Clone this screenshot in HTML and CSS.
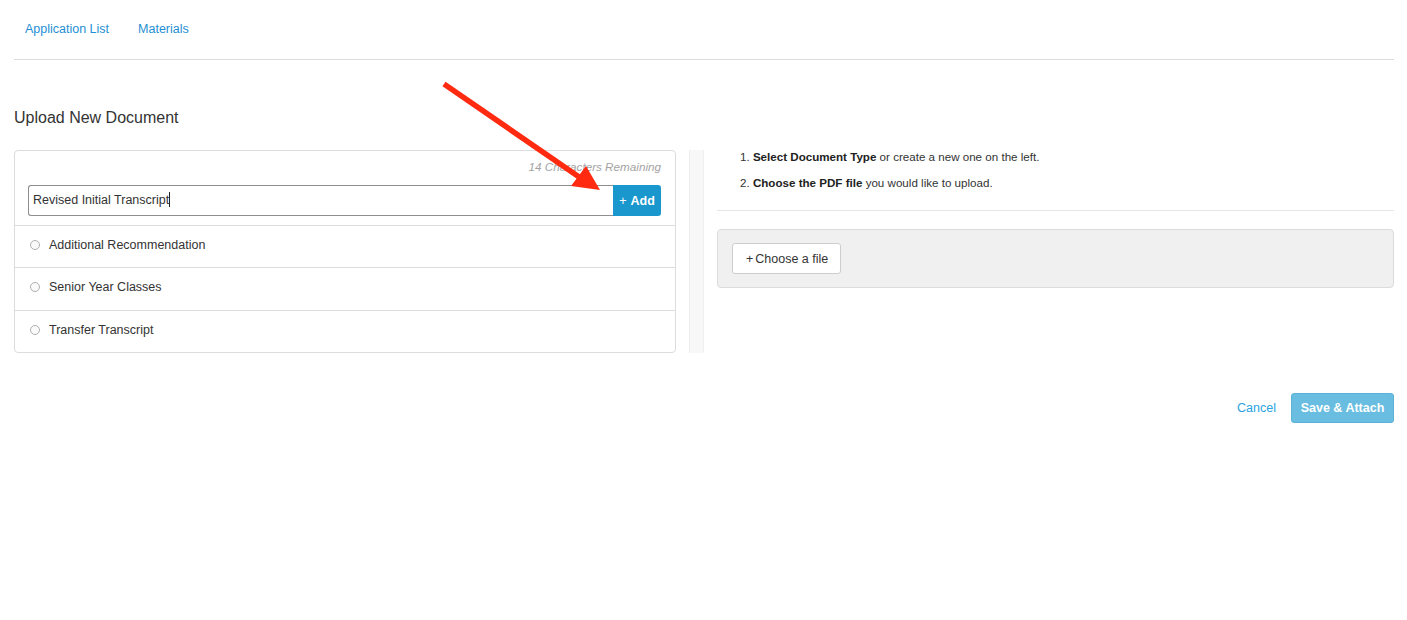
FILE: index.html
```html
<!DOCTYPE html>
<html>
<head>
<meta charset="utf-8">
<link rel="stylesheet" href="styles.css">
</head>
<body>
<div class="page">
  <nav class="nav">
    <a class="nav-link" href="#">Application List</a>
    <a class="nav-link" href="#">Materials</a>
  </nav>
  <h1 class="title">Upload New Document</h1>
  <div class="columns">
    <div class="types">
      <div class="types-head">
        <div class="remaining">14 Characters Remaining</div>
        <div class="input-group">
          <div class="text-input">Revised Initial Transcript<span class="caret"></span></div>
          <button class="add-btn"><span class="plus">+</span> Add</button>
        </div>
      </div>
      <div class="type-row"><span class="radio"></span>Additional Recommendation</div>
      <div class="type-row type-row-mid"><span class="radio"></span>Senior Year Classes</div>
      <div class="type-row"><span class="radio"></span>Transfer Transcript</div>
    </div>
    <div class="divider"></div>
    <div class="upload">
      <div class="steps">
        <div class="step">1. <b>Select Document Type</b> or create a new one on the left.</div>
        <div class="step">2. <b>Choose the PDF file</b> you would like to upload.</div>
      </div>
      <div class="file-box">
        <button class="file-btn"><span class="fplus">+</span>Choose a file</button>
      </div>
    </div>
  </div>
  <div class="actions">
    <a class="cancel" href="#">Cancel</a>
    <button class="save">Save &amp; Attach</button>
  </div>
</div>
<svg class="arrow" width="1407" height="620" viewBox="0 0 1407 620">
  <line x1="444" y1="84" x2="582" y2="179" stroke="#ff2a10" stroke-width="5.5" stroke-linecap="butt"/>
  <polygon points="600,190 571,186 586,166" fill="#ff2a10"/>
</svg>
</body>
</html>
```

FILE: styles.css
```css
html, body {
  margin: 0;
  padding: 0;
  background: #fff;
}
body {
  font-family: "Liberation Sans", Arial, Helvetica, sans-serif;
  color: #333;
  font-size: 12.5px;
  position: relative;
}
.page {
  padding: 0 13px 0 14px;
}
.nav {
  display: flex;
  gap: 29px;
  padding: 21px 0 0 11px;
  height: 38px;
  border-bottom: 1px solid #dcdcdc;
}
.nav-link {
  color: #1f8fd3;
  text-decoration: none;
  font-size: 12.5px;
  line-height: 16px;
}
.title {
  margin: 48px 0 22px;
  font-size: 16px;
  line-height: 20px;
  font-weight: normal;
  color: #333;
}
.columns {
  display: flex;
  align-items: stretch;
}
.types {
  width: 660px;
  border: 1px solid #dcdcdc;
  border-radius: 4px;
}
.types-head {
  padding: 9px 14px 9px 13px;
}
.remaining {
  text-align: right;
  font-style: italic;
  color: #a3a3a3;
  font-size: 11.7px;
  line-height: 14px;
  margin-bottom: 11px;
}
.input-group {
  display: flex;
  height: 31px;
}
.text-input {
  flex: 1;
  box-sizing: border-box;
  border: 1px solid #8e8e8e;
  border-right: none;
  border-radius: 3px 0 0 3px;
  padding: 0 4px;
  line-height: 29px;
  font-size: 12.5px;
  color: #333;
}
.caret {
  display: inline-block;
  width: 1px;
  height: 15px;
  background: #222;
  vertical-align: -3px;
}
.add-btn {
  width: 48px;
  border: none;
  background: #1a98cd;
  color: #fff;
  font-family: inherit;
  font-weight: bold;
  font-size: 12.5px;
  border-radius: 0 3px 3px 0;
  padding: 0;
}
.plus {
  font-weight: normal;
  margin-right: 1px;
}
.type-row {
  display: flex;
  align-items: center;
  border-top: 1px solid #dcdcdc;
  height: 37px;
  padding: 0 15px 4px;
  font-size: 12.5px;
  color: #333;
}
.type-row-mid {
  height: 38px;
}
.radio {
  width: 8px;
  height: 8px;
  border: 1px solid #b0b0b0;
  border-radius: 50%;
  margin-right: 9px;
  background: #fafafa;
}
.divider {
  width: 13px;
  margin: 0 13px;
  background: #f8f8f8;
  border-left: 1px solid #ededed;
  border-right: 1px solid #f0f0f0;
}
.upload {
  flex: 1;
}
.steps {
  padding: 0 0 20px 23px;
  border-bottom: 1px solid #e6e6e6;
}
.step {
  font-size: 11.6px;
  line-height: 14px;
  color: #333;
  margin-bottom: 12px;
}
.step:last-child {
  margin-bottom: 0;
}
.step b {
  color: #222;
}
.file-box {
  margin-top: 18px;
  background: #f0f0f0;
  border: 1px solid #dcdcdc;
  border-radius: 4px;
  padding: 13px 14px;
}
.file-btn {
  height: 31px;
  padding: 0 12px 0 13px;
  background: #fff;
  border: 1px solid #cdcdcd;
  border-radius: 3px;
  font-family: inherit;
  font-size: 12.5px;
  color: #333;
}
.fplus {
  margin-right: 2px;
}
.actions {
  display: flex;
  justify-content: flex-end;
  align-items: center;
  margin-top: 40px;
}
.cancel {
  color: #2aa3df;
  text-decoration: none;
  font-size: 12.5px;
  margin-right: 15px;
}
.save {
  width: 103px;
  height: 30px;
  background: #68bde0;
  border: 1px solid #5cb2d6;
  border-radius: 3px;
  color: #fff;
  font-family: inherit;
  font-weight: bold;
  font-size: 12.5px;
  padding: 0;
}
.arrow {
  position: absolute;
  left: 0;
  top: 0;
  pointer-events: none;
}
```
